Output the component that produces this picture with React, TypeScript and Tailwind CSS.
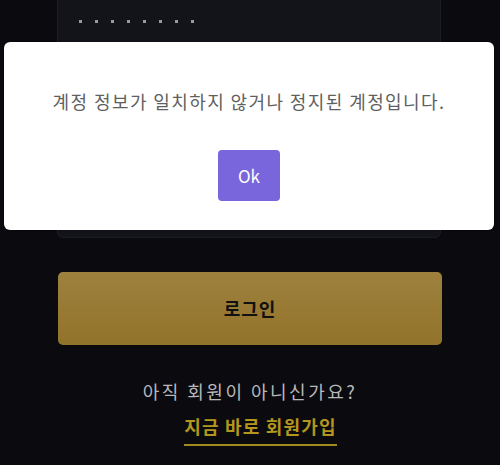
import React from "react";

const font = { fontFamily: '"Noto Sans CJK KR", "Noto Sans", sans-serif' };

export default function App() {
  return (
    <div
      className="relative w-[500px] h-[465px] overflow-hidden bg-[#0a0a0f]"
      style={font}
    >
      <div className="mx-[57px] w-[384px] -mt-[20px] h-[258px] rounded-b-[6px] bg-[#131419] border border-[#1c1d23] px-[21px] pt-[39px]">
        <div className="flex gap-[13px]">
          {Array.from({ length: 8 }).map((_, i) => (
            <span key={i} className="block w-[3px] h-[3px] bg-[#9a9a9e]" />
          ))}
        </div>
      </div>

      <div className="flex justify-center mt-[34px]">
        <button className="w-[384px] h-[73px] rounded-[5px] bg-gradient-to-b from-[#9d813d] to-[#92732a] text-[18px] tracking-[1px] font-bold text-[#111]">
          로그인
        </button>
      </div>

      <div className="flex flex-col items-center mt-[32px]">
        <p className="text-[18px] leading-[28px] tracking-[2.5px] text-[#b9b9bc]">
          아직 회원이 아니신가요?
        </p>
        <a className="ml-[21px] mt-[7px] text-[18px] leading-[28px] tracking-[1.2px] font-bold text-[#b3961e] border-b-2 border-[#a08a1e] pb-[4px]">
          지금 바로 회원가입
        </a>
      </div>

      {/* alert */}
      <div className="absolute left-[4px] top-[42px] w-[490px] h-[188px] rounded-[6px] bg-white shadow-[0_0_2px_rgba(0,0,0,0.4)] flex flex-col items-center">
        <p className="mt-[46px] text-[18px] leading-[26px] tracking-[1.4px] text-[#5f5f5f]">
          계정 정보가 일치하지 않거나 정지된 계정입니다.
        </p>
        <button className="mt-[36px] w-[62px] h-[51px] rounded-[4px] bg-[#7965dc] text-white text-[17px]">
          Ok
        </button>
      </div>
    </div>
  );
}
